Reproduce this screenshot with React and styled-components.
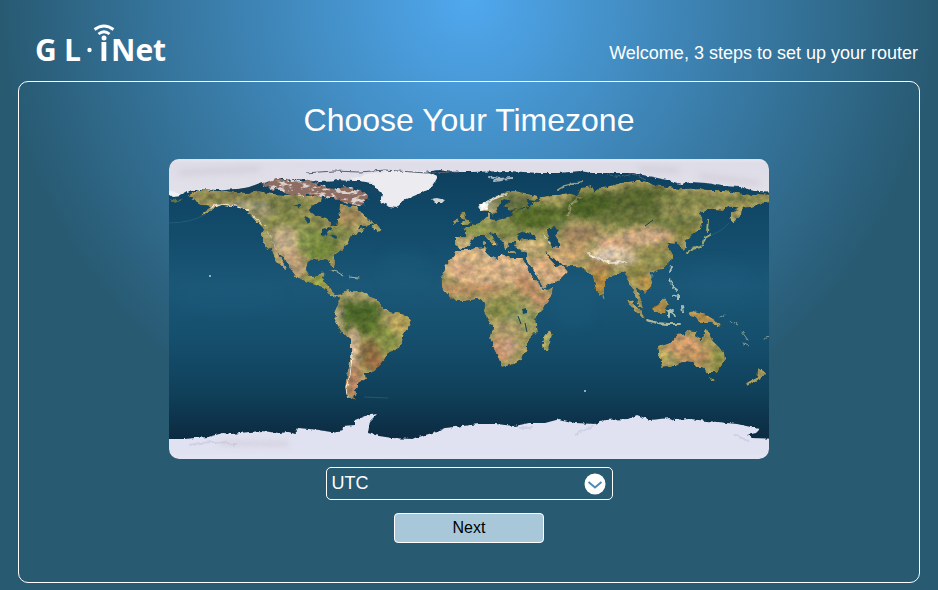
import React, { useState } from "react";
import styled, { createGlobalStyle } from "styled-components";

const GlobalStyle = createGlobalStyle`
  *, *::before, *::after { box-sizing: border-box; }
  body {
    margin: 0;
    color: #fff;
    font-family: "Liberation Sans", Arial, Helvetica, sans-serif;
    background: #285a72;
  }
`;

const Page = styled.div`
  display: flex;
  flex-direction: column;
  min-height: 100vh;
  padding: 24px 18px 7px;
  background: radial-gradient(circle 50vw at 50% 0, #50a8ee 0%, #285a72 100%) #285a72;
`;

const Header = styled.header`
  display: flex;
  align-items: flex-start;
  justify-content: space-between;
  height: 57px;
  padding: 0 2px 0 16px;
`;

const Logo = styled.svg`
  display: block;
  width: 140px;
  height: 48px;
  fill: #fff;
  font-family: "Open Sans", "Noto Sans", sans-serif;
  font-size: 30px;
  font-weight: 700;
`;

const Welcome = styled.p`
  margin: 18px 0 0;
  font-size: 18px;
  line-height: 22px;
`;

const Panel = styled.main`
  display: flex;
  flex: 1;
  flex-direction: column;
  align-items: center;
  padding: 18px 20px 39px;
  border: 1px solid #fff;
  border-radius: 10px;
`;

const Title = styled.h1`
  margin: 0 0 19px;
  font-size: 32px;
  font-weight: 400;
  line-height: 40px;
`;

const MapFrame = styled.div`
  width: 100%;
  max-width: 600px;
  overflow: hidden;
  border-radius: 10px;
  margin-bottom: 8px;

  svg { display: block; width: 100%; height: auto; }
`;

const SelectBox = styled.div`
  position: relative;
  width: 287px;
  max-width: 100%;
  margin-bottom: 13px;
`;

const ZoneSelect = styled.select`
  display: block;
  width: 100%;
  height: 33px;
  padding: 0 36px 2px 5px;
  appearance: none;
  border: 1px solid #fff;
  border-radius: 5px;
  color: #fff;
  background: #285a72;
  font: inherit;
  font-size: 18px;
`;

const SelectArrow = styled.svg`
  position: absolute;
  top: 6px;
  right: 7px;
  width: 22px;
  height: 22px;
  pointer-events: none;
`;

const NextButton = styled.button`
  width: 150px;
  height: 30px;
  padding: 0;
  border: 1px solid #fff;
  border-radius: 4px;
  color: #000;
  background: #a8c8da;
  font: inherit;
  font-size: 16px;
  cursor: pointer;
`;

const LAND = [
  // North and Central America
  "M18 37L29 31 56 32 78 34 90 32 104 35 122 36 134 37 146 36 152 38 151 43 143 47 141 52 146 56 158 59 162 66 167 67 168 61 171 58 170 52 171 46 177 46 188 48 191 53 196 56 201 62 206 65 198 67 192 67 188 70 196 69 194 73 187 75 181 78 179 84 174 90 167 95 164 99 166 104 165 109 162 107 160 101 153 100 149 102 145 101 139 103 137 110 139 116 143 119 148 118 150 114 156 113 155 118 153 122 159 124 161 131 166 136 172 135 170 139 166 138 160 135 154 128 146 125 136 122 128 119 123 112 113 97 109 94 118 110 116 111 107 101 103 92 98 89 93 81 93 74 95 70 88 63 82 56 73 50 63 47 54 46 47 49 38 54 31 57 38 51 40 47 32 46 28 43 22 42 25 39Z",
  // South America
  "M171 136L178 131 183 133 190 132 197 134 203 138 211 143 214 150 222 153 229 154 236 156 242 161 240 168 235 174 233 184 230 189 219 194 214 203 208 210 203 214 195 214 196 220 189 224 190 228 186 233 189 235 184 239 188 242 178 239 176 228 178 215 182 198 182 181 173 174 169 167 165 159 167 152 170 144Z",
  // Africa
  "M288 91L299 91 306 89 316 88 318 95 328 100 333 96 343 99 354 99 358 107 363 117 369 124 373 130 384 129 383 135 378 145 371 152 366 158 368 172 358 183 358 191 351 201 343 206 333 208 328 196 324 188 321 178 323 168 317 158 315 152 316 144 309 140 297 142 286 142 278 135 273 127 272 118 276 107 283 99Z",
  "M381 171L383 176 379 191 374 191 373 186 375 178Z",
  // Europe and Asia
  "M286 87L286 78 298 78 298 71 292 69 301 68 307 64 313 62 318 57 318 53 321 55 321 60 328 61 343 58 344 52 349 49 358 49 366 43 371 38 383 36 390 36 399 34 408 37 412 29 422 27 425 33 430 29 438 28 451 24 464 22 475 22 486 26 501 28 513 30 531 29 543 32 558 32 574 35 588 36 610 37 610 42 590 45 583 48 574 49 572 56 564 64 560 59 562 54 569 48 560 48 554 51 542 50 531 54 534 62 532 70 524 75 519 80 516 83 518 90 513 92 511 86 506 84 500 83 498 87 503 93 503 101 495 109 485 113 480 114 483 122 482 129 476 134 469 129 467 129 472 140 474 150 468 145 464 129 460 126 458 119 455 113 447 116 439 119 435 126 435 136 430 138 426 127 423 116 418 113 413 108 400 107 394 106 387 101 382 97 389 105 394 107 399 113 391 121 374 129 366 114 358 103 358 94 351 90 345 88 346 83 340 83 338 91 334 84 328 76 322 74 324 80 329 85 326 88 319 81 315 77 309 77 302 82 298 88 292 90Z",
  // Scandinavia
  "M309 48L313 43 320 40 329 36 338 32 347 32 356 34 369 38 366 42 358 41 359 47 343 51 335 48 341 42 336 40 328 47 329 53 324 57 319 52 312 52Z",
  // Australia, Tasmania, New Guinea
  "M489 188L494 186 503 183 506 178 511 175 514 177 519 171 528 172 526 177 533 181 536 173 538 170 543 181 549 187 555 193 556 201 548 214 538 214 534 208 527 208 524 204 514 203 503 207 493 208 491 198Z",
  "M541 218L547 219 545 223 542 222Z",
  "M519 153L525 152 534 154 546 161 552 168 541 164 533 164 528 159 521 157Z",
  // Sunda Islands
  "M483 149L489 146 494 139 499 144 495 154 485 154Z",
  "M457 141L462 142 470 149 476 156 475 160 468 154Z",
  // British Isles, Newfoundland
  "M291 54L295 52 296 58 302 63 299 66 290 66 295 62Z",
  "M283 62L289 59 290 64 284 65Z",
  "M202 68L207 64 213 71 210 73Z",
  // New Zealand
  "M589 209L597 214 593 219 578 227 577 224 588 218Z",
].join("");

const NORTH_ICE =
  "M-10 -10H610V34L590 33 571 28 553 27 538 24 522 23 512 25 498 21 484 18 464 14 445 14 423 14 411 12 390 14 370 14 340 12 300 13 283 13 270 11 256 13 268 18 265 24 260 31 249 34 240 38 233 42 228 49 220 48 213 43 212 35 203 24 190 22 176 22 150 23 128 20 109 20 94 24 80 29 55 31 22 31 19 34 17 33 10 37 -10 34Z";

const SOUTH_ICE =
  "M-10 310V280L16 280 26 279 39 278 54 274 63 275 80 273 93 272 110 274 120 273 126 275 129 269 150 271 163 273 174 271 173 267 186 266 186 261 196 257 208 255 201 262 199 274 210 277 223 279 243 280 263 274 276 269 286 268 310 265 326 265 346 267 360 264 376 264 391 260 406 264 426 265 436 261 459 260 468 256 481 261 501 259 505 261 520 260 548 263 568 265 591 270 587 274 578 276 583 279 610 280V310Z";

const ARCTIC_ISLANDS =
  "M93 25L108 20 128 21 142 22 155 27 164 30 176 28 190 31 199 36 198 42 190 47 179 44 167 39 154 39 141 37 130 37 118 35 112 31 103 30Z";

// [cx, cy, rx, ry, colour, opacity]
const PATCHES = [
  [60, 38, 40, 6, "#777746", 0.8],
  [110, 46, 32, 9, "#6e7840", 0.8],
  [80, 47, 22, 4, "#aaa288", 0.8],
  [95, 56, 14, 5, "#938e68", 0.9],
  [120, 64, 26, 10, "#7e8746", 0.8],
  [114, 82, 18, 14, "#bda783", 1],
  [124, 105, 12, 12, "#b79a74", 1],
  [101, 84, 5, 12, "#8a8c58", 0.8],
  [150, 86, 20, 16, "#6c8236", 0.9],
  [166, 76, 16, 8, "#778344", 0.9],
  [135, 80, 9, 16, "#8c9850", 0.8],
  [180, 57, 14, 9, "#9a8054", 0.8],
  [150, 61, 10, 6, "#6e7843", 0.9],
  [148, 123, 16, 6, "#8e9a45", 0.9],
  [190, 153, 22, 14, "#4e672a", 1],
  [194, 168, 22, 9, "#536b2a", 0.9],
  [190, 137, 18, 5, "#a19a68", 0.9],
  [232, 164, 10, 12, "#b8a259", 1],
  [216, 182, 14, 13, "#839141", 0.8],
  [201, 196, 12, 15, "#84673f", 0.9],
  [208, 204, 8, 7, "#ab6b47", 0.6],
  [184, 188, 4, 20, "#dbb99d", 1],
  [185, 223, 8, 18, "#b28063", 0.9],
  [169, 160, 3, 16, "#cfc099", 0.8],
  [315, 106, 42, 20, "#d2b083", 1],
  [340, 112, 28, 14, "#d0ac82", 1],
  [294, 110, 12, 8, "#c49a76", 0.7],
  [302, 130, 35, 6, "#bb8a62", 0.8],
  [359, 124, 12, 12, "#b7835e", 0.8],
  [374, 140, 12, 8, "#bb8a66", 0.8],
  [336, 151, 20, 11, "#87894a", 1],
  [351, 160, 14, 12, "#8f985d", 0.9],
  [338, 171, 15, 9, "#ae986a", 0.9],
  [332, 190, 12, 11, "#c08e6b", 1],
  [340, 188, 9, 8, "#d1a58a", 0.8],
  [350, 197, 8, 7, "#9b9259", 0.9],
  [378, 184, 4, 12, "#abb067", 1],
  [295, 83, 10, 6, "#bda976", 1],
  [308, 69, 14, 7, "#83924b", 1],
  [338, 70, 24, 10, "#81894a", 1],
  [343, 42, 22, 8, "#667042", 1],
  [318, 45, 8, 8, "#aca991", 0.7],
  [370, 58, 30, 13, "#566b2b", 1],
  [428, 47, 34, 15, "#4c6128", 1],
  [475, 40, 34, 13, "#57652f", 1],
  [460, 58, 36, 9, "#657039", 1],
  [520, 42, 34, 9, "#7c8147", 0.9],
  [570, 40, 34, 6, "#818449", 0.9],
  [510, 63, 23, 8, "#737b43", 1],
  [411, 75, 20, 9, "#9b805c", 1],
  [390, 66, 10, 6, "#758248", 0.8],
  [362, 87, 14, 6, "#cdb07a", 1],
  [402, 93, 18, 10, "#bd9b6b", 1],
  [380, 112, 22, 16, "#d0a97b", 1],
  [430, 108, 12, 9, "#a38251", 1],
  [432, 124, 9, 12, "#a8823e", 1],
  [446, 84, 18, 7, "#d1a67e", 1],
  [478, 78, 26, 8, "#caa582", 1],
  [443, 95, 20, 7, "#d8c5ac", 1],
  [456, 99, 11, 7, "#c8b59a", 1],
  [487, 97, 17, 12, "#8f8a4e", 1],
  [500, 84, 9, 5, "#9c8a52", 1],
  [466, 113, 12, 9, "#8c8444", 1],
  [477, 126, 7, 10, "#b8934a", 1],
  [518, 74, 14, 5, "#7c7b3d", 1],
  [492, 196, 6, 12, "#b7a45a", 0.9],
  [515, 186, 18, 10, "#c89668", 1],
  [527, 198, 20, 8, "#ba8f5e", 1],
  [549, 201, 9, 15, "#8b8e45", 0.9],
  [538, 178, 6, 10, "#a89557", 0.9],
  [535, 158, 18, 6, "#bb8e49", 1],
  [490, 149, 8, 8, "#ac8842", 1],
  [467, 150, 8, 10, "#a59a5e", 1],
];

const LAKES = [
  "M348 75L355 72 366 77 368 81 355 80 349 81Z",
  "M378 70L385 68 390 71 386 76 391 84 391 89 384 88 379 78Z",
  "M376 92L382 98 389 103 393 106 387 107 380 99Z",
  "M353 150L358 149 358 154 354 155Z",
  "M153 70L160 68 164 71 159 72 155 78 153 77Z",
  "M161 75L168 77 166 80Z",
  "M124 47L132 45 130 49Z",
  "M137 57L141 60 139 65 136 61Z",
];

const timezones = ["UTC", "Europe/London", "Europe/Berlin", "America/New_York", "Asia/Shanghai", "Asia/Tokyo"];

function GlinetLogo() {
  return (
    <Logo viewBox="-2 0 140 48" role="img" aria-label="GL iNet">
      <text x="-1" y="37">G</text>
      <text x="28" y="37">L</text>
      <circle cx="53.500" cy="26" r="2.200" />
      <rect x="65.500" y="18" width="4.800" height="19" />
      <circle cx="68" cy="14" r="2.500" />
      <text x="75" y="37">Net</text>
      <g fill="none" stroke="#fff">
        <path d="M62.500 10Q68 5.500 73.500 10" strokeWidth="2.800" />
        <path d="M58.500 5.500Q68 -1.500 77.500 5.500" strokeWidth="2.800" />
      </g>
    </Logo>
  );
}

function WorldMap() {
  return (
    <svg viewBox="0 0 600 300" role="img" aria-label="World map">
      <defs>
        <linearGradient id="ocean" x1="0" y1="0" x2="0" y2="1">
          <stop offset="0" stopColor="#0d3e5d" />
          <stop offset="0.25" stopColor="#134c6b" />
          <stop offset="0.42" stopColor="#1b5777" />
          <stop offset="0.6" stopColor="#154f6d" />
          <stop offset="0.78" stopColor="#10405a" />
          <stop offset="0.92" stopColor="#0c2c43" />
        </linearGradient>
        <linearGradient id="ice" x1="0" y1="0" x2="0" y2="1">
          <stop offset="0" stopColor="#dcdbe7" />
          <stop offset="1" stopColor="#e4e3ea" />
        </linearGradient>
        <clipPath id="land"><path d={LAND} /></clipPath>
        <filter id="soft"><feGaussianBlur stdDeviation="3" /></filter>
        <filter id="haze"><feGaussianBlur stdDeviation="8" /></filter>
        <filter id="terrain" x="-10" y="-10" width="620" height="320" filterUnits="userSpaceOnUse" colorInterpolationFilters="sRGB">
          <feTurbulence type="fractalNoise" baseFrequency="0.18" numOctaves="2" seed="4" result="edge" />
          <feDisplacementMap in="SourceGraphic" in2="edge" scale="5" xChannelSelector="R" yChannelSelector="G" result="shape" />
          <feGaussianBlur in="shape" stdDeviation="0.400" result="smooth" />
          <feTurbulence type="fractalNoise" baseFrequency="0.13 0.16" numOctaves="3" seed="9" />
          <feColorMatrix values="1 0 0 0 0  0.800 0.200 0 0 0  0.700 0 0.300 0 0  0 0 0 0 1" result="grain" />
          <feComposite in="smooth" in2="grain" operator="arithmetic" k1="0.650" k2="0.680" k3="0" k4="0" result="lit" />
          <feComposite in="lit" in2="smooth" operator="in" />
        </filter>
        <filter id="frost" x="-10" y="-10" width="620" height="320" filterUnits="userSpaceOnUse" colorInterpolationFilters="sRGB">
          <feTurbulence type="fractalNoise" baseFrequency="0.2" numOctaves="2" seed="7" result="edge" />
          <feDisplacementMap in="SourceGraphic" in2="edge" scale="4" xChannelSelector="R" yChannelSelector="G" />
          <feGaussianBlur stdDeviation="0.400" />
        </filter>
        <filter id="speckle" x="80" y="5" width="135" height="55" filterUnits="userSpaceOnUse" colorInterpolationFilters="sRGB">
          <feTurbulence type="fractalNoise" baseFrequency="0.12 0.25" numOctaves="3" seed="12" />
          <feColorMatrix values="0 0 0 0 0.860  0 0 0 0 0.820  0 0 0 0 0.810  7 0 0 0 -3.500" result="snow" />
          <feTurbulence type="fractalNoise" baseFrequency="0.2" numOctaves="2" seed="3" result="edge" />
          <feDisplacementMap in="SourceGraphic" in2="edge" scale="8" xChannelSelector="R" yChannelSelector="G" result="rock" />
          <feComposite in="snow" in2="rock" operator="in" result="cover" />
          <feMerge result="mixed">
            <feMergeNode in="rock" />
            <feMergeNode in="cover" />
          </feMerge>
          <feGaussianBlur in="mixed" stdDeviation="0.500" />
        </filter>
      </defs>

      <rect width="600" height="300" fill="url(#ocean)" />
      <g filter="url(#haze)" fill="#21698a" opacity="0.150">
        <ellipse cx="60" cy="140" rx="55" ry="12" />
        <ellipse cx="235" cy="110" rx="24" ry="20" />
        <ellipse cx="405" cy="148" rx="20" ry="24" />
        <ellipse cx="550" cy="125" rx="34" ry="22" />
      </g>
      <path d="M0 64Q22 64 37 55M534 79Q552 74 560 64M195 238l24 1" fill="none" stroke="#347088" opacity="0.500" />

      <g filter="url(#frost)">
        <path d={NORTH_ICE} fill="url(#ice)" />
        <path d="M181 20L198 15 229 11 256 12 268 18 259 31 233 42 228 49 213 43 203 24Z" fill="#ecebf0" />
        <path d="M262 40L268 39 276 41 273 44 266 44Z" fill="#cfd4d2" />
        <path d="M-10 30L8 33 12 37 4 38 0 35 -10 35Z" fill="#f0f0f4" />
        <path d="M0 39L8 41 14 40 6 44Z" fill="#647548" />
      </g>
      <path d="M20 32L45 32 70 30 80 28 91 24 96 26 90 32 103 31 111 35 95 36 75 34 56 35Z" fill="#173e57" />
      <path filter="url(#speckle)" d={ARCTIC_ISLANDS} fill="#8d6c61" />
      <path filter="url(#frost)" d="M158 26L167 21 184 22 203 26 213 36 211 43 202 40 199 34 188 29 174 26 163 28Z" fill="#124664" />
      <path filter="url(#frost)" d="M136 14L165 12 190 13 216 11 257 14 290 13M437 15L452 18 464 15 477 21" fill="none" stroke="#53606f" strokeWidth="1" />

      <g filter="url(#terrain)">
        <g clipPath="url(#land)">
          <rect x="-10" width="620" height="300" fill="#a2985e" />
          <g filter="url(#soft)">
            {PATCHES.map(([cx, cy, rx, ry, fill, opacity], i) => (
              <ellipse key={i} cx={cx} cy={cy} rx={rx} ry={ry} fill={fill} opacity={opacity} />
            ))}
          </g>
          <g fill="none" stroke="#efe9dd" strokeLinecap="round">
            <path d="M42 48L53 46 65 47 78 52M309 48L321 41 337 35" strokeWidth="2" opacity="0.800" />
            <path d="M83 55L96 68M98 72L108 92" strokeWidth="1" opacity="0.500" />
            <path d="M419 94L430 100 443 104 456 103" strokeWidth="2" opacity="0.800" />
            <path d="M178 238L177 228 181 216 184 190" strokeWidth="1" />
            <path d="M374 75L382 84 388 88" strokeWidth="1" opacity="0.800" />
          </g>
          <path d="M309 46L318 42 319 50 311 53Z" fill="#f0eff0" />
          <path d="M399 57L401 46 412 38M424 82L436 76 450 77" fill="none" stroke="#a5a176" strokeWidth="2" opacity="0.700" />
        </g>
      </g>

      <g filter="url(#frost)" fill="#144a68">
        {LAKES.map((d) => <path key={d} d={d} />)}
      </g>
      <path d="M349 157L352 165M356 164L358 173M476 67L484 61" fill="none" stroke="#123f55" strokeWidth="1" />

      <g filter="url(#frost)" fill="none" strokeLinecap="round">
        <path d="M389 31L396 27 413 23" stroke="#99a18a" strokeWidth="2" />
        <path d="M320 18L329 20 343 19M326 22L333 21" stroke="#a5b4bd" strokeWidth="2" />
        <path d="M518 94L523 90 532 88 536 80M536 79L541 76M538 73L539 61" stroke="#a5aa70" strokeWidth="2" />
        <path d="M161 111L168 113 175 117M181 118L190 119" stroke="#a3b596" strokeWidth="1" />
        <path d="M478 161L488 164 499 165 511 165" stroke="#adb698" strokeWidth="2" />
        <path d="M501 113L503 108M501 120L504 128 508 131M505 137L509 136 509 141M499 153L504 151M500 152L500 158M503 153L505 158M513 147L514 153" stroke="#a8c0b4" strokeWidth="2" />
        <path d="M551 158L556 156M561 162L569 166M573 173L579 181M574 184L579 187M595 180L600 178M434 136L435 140M481 117L484 117" stroke="#809e9c" strokeWidth="1" />
        <path d="M315 82L315 85M316 88L317 91M340 93L345 93M354 92L357 91" stroke="#a19d70" strokeWidth="2" />
      </g>
      <g fill="#b6d6d5">
        <circle cx="41" cy="117" r="1" />
        <circle cx="416" cy="232" r="1" />
      </g>

      <g filter="url(#frost)">
        <path d={SOUTH_ICE} fill="#e1e2f1" />
        <path d="M20 286Q50 280 67 286M406 275Q417 271 424 267M350 269L363 269M565 276L580 282" stroke="#cfd0e3" strokeWidth="2" fill="none" />
      </g>
      <path d="M10 14L90 10M470 10L510 12M530 17L590 24M50 284L120 285" filter="url(#soft)" fill="none" stroke="#c5bccb" strokeWidth="4" opacity="0.600" />
      <path d="M0 295H600V300H0ZM0 0H600V3H0Z" fill="#e3e8f2" opacity="0.500" />
    </svg>
  );
}

export default function App() {
  const [zone, setZone] = useState("UTC");
  return (
    <>
      <GlobalStyle />
      <Page>
        <Header>
          <GlinetLogo />
          <Welcome>Welcome, 3 steps to set up your router</Welcome>
        </Header>
        <Panel>
          <Title>Choose Your Timezone</Title>
          <MapFrame><WorldMap /></MapFrame>
          <SelectBox>
            <ZoneSelect aria-label="Timezone" value={zone} onChange={(e) => setZone(e.target.value)}>
              {timezones.map((name) => <option key={name}>{name}</option>)}
            </ZoneSelect>
            <SelectArrow viewBox="0 0 22 22" aria-hidden="true">
              <circle cx="11" cy="11" r="10.500" fill="#fff" />
              <path d="M4.500 9L11 14.500 17.500 9" fill="none" stroke="#4c8abb" strokeWidth="2" />
            </SelectArrow>
          </SelectBox>
          <NextButton type="button">Next</NextButton>
        </Panel>
      </Page>
    </>
  );
}
